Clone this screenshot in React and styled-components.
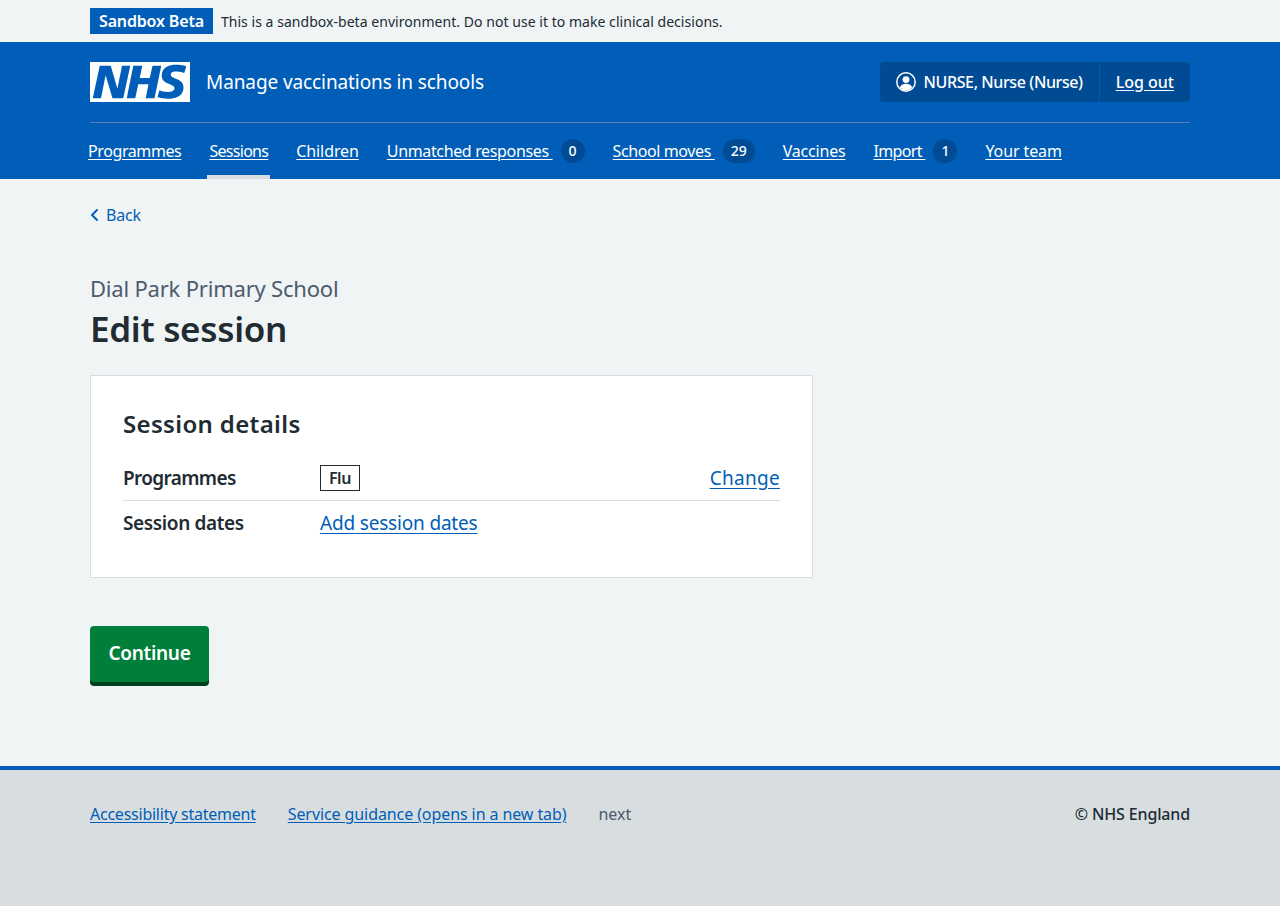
import React from "react";
import styled, { createGlobalStyle } from "styled-components";

const GlobalStyle = createGlobalStyle`
  html, body {
    margin: 0;
    padding: 0;
    background: #f0f4f5;
    color: #212b32;
    font-family: "Noto Sans", "Open Sans", sans-serif;
  }
`;

const Page = styled.div`
  display: flex;
  flex-direction: column;
  min-height: 906px;
`;

const Container = styled.div`
  width: 1100px;
  margin: 0 auto;
`;

const Banner = styled(Container)`
  display: flex;
  align-items: center;
  gap: 8px;
  height: 42px;
`;

const BannerTag = styled.strong`
  background: #005eb8;
  color: #fff;
  font-size: 16px;
  font-weight: 600;
  line-height: 26px;
  padding: 0 9px;
  letter-spacing: -0.16px;
`;

const BannerText = styled.span`
  font-size: 14px;
  line-height: 26px;
  letter-spacing: 0.04px;
  padding-top: 1px;
`;

const Header = styled.header`
  background: #005eb8;
  height: 137px;
  color: #fff;
`;

const HeaderTop = styled(Container)`
  display: flex;
  justify-content: space-between;
  align-items: center;
  height: 80px;
  border-bottom: 1px solid #5f7fb4;
`;

const Brand = styled.div`
  display: flex;
  align-items: center;
  gap: 16px;
`;

const Logo = styled.svg`
  display: block;
  width: 100px;
  height: 40px;
`;

const ServiceName = styled.span`
  font-size: 19px;
  line-height: 28px;
  letter-spacing: -0.1px;
`;

const Account = styled.div`
  display: flex;
  height: 40px;
  background: #004b93;
  border-radius: 4px;
  font-size: 16px;
`;

const AccountItem = styled.div`
  display: flex;
  align-items: center;
  gap: 8px;
  padding: 0 16px;
  font-weight: 500;
  & + & {
    border-left: 1px solid #005eb8;
  }
`;

const AccountName = styled.span`
  letter-spacing: -0.4px;
`;

const WhiteLink = styled.a`
  color: #fff;
  text-decoration: underline;
  text-underline-offset: 2px;
  white-space: pre;
`;

const Nav = styled(Container)`
  display: flex;
  gap: 24px;
  height: 56px;
`;

const NavItem = styled.div`
  display: flex;
  align-items: center;
  gap: 8px;
  height: 56px;
  box-sizing: border-box;
  padding: 4px 2px 0;
  margin-left: ${(p) => (p.$first ? "-4px" : "0")};
  font-size: 16px;
  letter-spacing: ${(p) => p.$tracking}px;
  border-bottom: 4px solid ${(p) => (p.$active ? "#d8dde0" : "transparent")};
`;

const Count = styled.span`
  display: inline-block;
  min-width: 8px;
  padding: 0 8px;
  height: 24px;
  line-height: 24px;
  border-radius: 12px;
  background: #004b93;
  color: #fff;
  font-size: 14px;
  font-weight: 500;
  text-align: center;
  letter-spacing: 0;
`;

const Main = styled(Container)`
  flex: 1;
`;

const BackLink = styled.a`
  display: flex;
  align-items: center;
  gap: 7px;
  margin-top: 24px;
  height: 24px;
  color: #005eb8;
  font-size: 16px;
  letter-spacing: -0.2px;
  text-decoration: none;
`;

const Caption = styled.div`
  margin-top: 47px;
  font-size: 22px;
  line-height: 28px;
  letter-spacing: -0.2px;
  color: #4c5a6e;
`;

const Title = styled.h1`
  margin: 5px 0 0;
  font-size: 35px;
  line-height: 44px;
  font-weight: 600;
  letter-spacing: -0.3px;
`;

const Card = styled.section`
  width: 723px;
  box-sizing: border-box;
  margin-top: 24px;
  padding: 32px;
  background: #fff;
  border: 1px solid #d8dde0;
  height: 203px;
`;

const CardTitle = styled.h2`
  margin: 0 0 16px;
  font-size: 24px;
  line-height: 32px;
  font-weight: 600;
  letter-spacing: 0.35px;
`;

const Row = styled.div`
  display: flex;
  align-items: center;
  height: 44px;
  border-bottom: ${(p) => (p.$line ? "1px solid #d8dde0" : "none")};
  font-size: 19px;
`;

const RowKey = styled.div`
  width: 197px;
  font-weight: 600;
  letter-spacing: ${(p) => p.$tracking}px;
`;

const RowValue = styled.div`
  flex: 1;
  display: flex;
  letter-spacing: -0.18px;
`;

const BlueLink = styled.a`
  color: #005eb8;
  text-decoration: underline;
  text-underline-offset: 3px;
`;

const ChangeLink = styled(BlueLink)`
  letter-spacing: 0.3px;
`;

const FooterLink = styled(BlueLink)`
  letter-spacing: ${(p) => p.$tracking}px;
  text-underline-offset: 2px;
`;

const Tag = styled.span`
  box-sizing: border-box;
  height: 26px;
  line-height: 24px;
  padding: 0 8px;
  border: 1px solid #212b32;
  font-size: 16px;
  font-weight: 600;
  letter-spacing: -0.5px;
`;

const Button = styled.button`
  display: block;
  margin-top: 48px;
  width: 119px;
  height: 56px;
  padding: 0 0 2px;
  background: #007f3b;
  border: 0;
  border-radius: 4px;
  box-shadow: 0 4px 0 #00401e;
  color: #fff;
  font-family: inherit;
  font-size: 19px;
  font-weight: 600;
  letter-spacing: -0.3px;
`;

const Footer = styled.footer`
  height: 140px;
  box-sizing: border-box;
  background: #d8dde0;
  border-top: 4px solid #005eb8;
  font-size: 16px;
`;

const FooterInner = styled(Container)`
  display: flex;
  align-items: center;
  justify-content: space-between;
  padding-top: 32px;
  line-height: 24px;
`;

const FooterLinks = styled.div`
  display: flex;
  gap: 32px;
`;

const FooterNote = styled.span`
  color: #4c5a6e;
`;

const Copyright = styled.span`
  font-weight: 500;
  letter-spacing: -0.15px;
`;

// tracking lines each label up with the widths of the original typeface
const navItems = [
  { label: "Programmes", tracking: -0.4 },
  { label: "Sessions", active: true, tracking: -0.7 },
  { label: "Children", tracking: -0.1 },
  { label: "Unmatched responses ", count: 0, tracking: -0.35 },
  { label: "School moves ", count: 29, tracking: -0.4 },
  { label: "Vaccines", tracking: -0.2 },
  { label: "Import ", count: 1, tracking: -0.65 },
  { label: "Your team", tracking: -0.1 },
];

export default function App() {
  return (
    <Page>
      <GlobalStyle />
      <Banner>
        <BannerTag>Sandbox Beta</BannerTag>
        <BannerText>
          This is a sandbox-beta environment. Do not use it to make clinical decisions.
        </BannerText>
      </Banner>
      <Header>
        <HeaderTop>
          <Brand>
            <Logo viewBox="0 0 40 16" aria-label="NHS">
              <path fill="#fff" d="M0 0h40v16H0z" />
              <path
                fill="#005eb8"
                d="M3.9 1.5h4.4l2.6 9h.1l1.8-9h3.3l-2.8 13H9l-2.7-9h-.1l-1.8 9H1.1M17.3 1.5h3.6l-1 4.9h4L25 1.5h3.5l-2.7 13h-3.5l1.1-5.6h-4.1l-1.2 5.6h-3.4M37.7 4.4c-.7-.3-1.6-.6-2.9-.6-1.4 0-2.5.2-2.5 1.3 0 1.8 5.1 1.2 5.1 5.1 0 3.6-3.3 4.5-6.4 4.5-1.3 0-2.9-.3-4-.7l.8-2.7c.7.4 2.1.7 3.2.7s2.8-.2 2.8-1.5c0-2.1-5.1-1.3-5.1-5 0-3.4 2.9-4.4 5.8-4.4 1.6 0 3.1.2 4 .6"
              />
            </Logo>
            <ServiceName>Manage vaccinations in schools</ServiceName>
          </Brand>
          <Account>
            <AccountItem>
              <svg width="20" height="20" viewBox="0 0 20 20" aria-hidden="true">
                <circle cx="10" cy="10" r="9.2" fill="none" stroke="#fff" strokeWidth="1.5" />
                <circle cx="10" cy="7.6" r="3.4" fill="#fff" />
                <path fill="#fff" d="M3.9 15.6c.6-2.6 3-3.8 6.1-3.8s5.500 1.200 6.100 3.800A8.600 8.600 0 0 1 10 18.700a8.600 8.600 0 0 1-6.100-3.100z" />
              </svg>
              <AccountName>NURSE, Nurse (Nurse)</AccountName>
            </AccountItem>
            <AccountItem>
              <WhiteLink href="#">Log out</WhiteLink>
            </AccountItem>
          </Account>
        </HeaderTop>
        <Nav>
          {navItems.map((item, i) => (
            <NavItem key={item.label} $active={item.active} $first={i === 0} $tracking={item.tracking}>
              <WhiteLink href="#">{item.label}</WhiteLink>
              {item.count !== undefined && <Count>{item.count}</Count>}
            </NavItem>
          ))}
        </Nav>
      </Header>
      <Main>
        <BackLink href="#">
          <svg width="9" height="14" viewBox="0 0 9 14" aria-hidden="true">
            <path d="M7 2 2 7l5 5" fill="none" stroke="#005eb8" strokeWidth="2" strokeLinecap="round" strokeLinejoin="round" />
          </svg>
          Back
        </BackLink>
        <Caption>Dial Park Primary School</Caption>
        <Title>Edit session</Title>
        <Card>
          <CardTitle>Session details</CardTitle>
          <Row $line>
            <RowKey $tracking={-0.65}>Programmes</RowKey>
            <RowValue>
              <Tag>Flu</Tag>
            </RowValue>
            <ChangeLink href="#">Change</ChangeLink>
          </Row>
          <Row>
            <RowKey $tracking={-0.37}>Session dates</RowKey>
            <RowValue>
              <BlueLink href="#">Add session dates</BlueLink>
            </RowValue>
          </Row>
        </Card>
        <Button>Continue</Button>
      </Main>
      <Footer>
        <FooterInner>
          <FooterLinks>
            <FooterLink href="#" $tracking={-0.24}>Accessibility statement</FooterLink>
            <FooterLink href="#" $tracking={-0.09}>Service guidance (opens in a new tab)</FooterLink>
            <FooterNote>next</FooterNote>
          </FooterLinks>
          <Copyright>© NHS England</Copyright>
        </FooterInner>
      </Footer>
    </Page>
  );
}
